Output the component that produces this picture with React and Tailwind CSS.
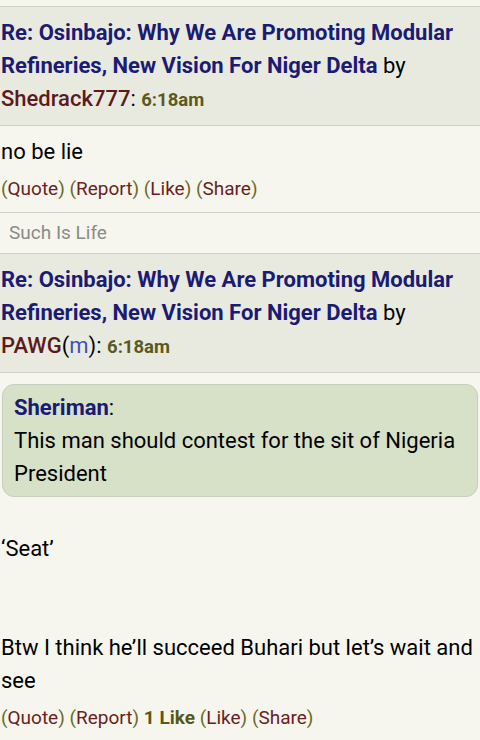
export default function App() {
  const font = { fontFamily: "Roboto, 'Noto Sans', sans-serif" };
  const Links = ({ likes }) => (
    <div className="mt-[6px] text-[19px] leading-[29px] text-[#6b6b24]">
      (<span className="text-[#6b1f22]">Quote</span>) (<span className="text-[#6b1f22]">Report</span>){" "}
      {likes && <b className="font-bold text-[#585818]">{likes} </b>}
      (<span className="text-[#6b1f22]">Like</span>) (<span className="text-[#6b1f22]">Share</span>)
    </div>
  );
  const Header = ({ children }) => (
    <div className="bg-[#e8eae0] border-b border-[#cfd0c6] pl-[1px] pr-1 pt-[9px] pb-[8px] text-[22px] leading-[33px] text-black">
      <span className="font-bold text-[#1b1b74]">
        Re: Osinbajo: Why We Are Promoting Modular Refineries, New Vision For Niger Delta
      </span>{" "}
      by {children}
    </div>
  );
  return (
    <div className="w-[480px] min-h-[740px] bg-[#f6f6ee]" style={font}>
      <div className="h-[7px] border-b border-[#cfd0c6]" />
      <Header>
        <span className="font-medium text-[#5c1a1c]">Shedrack777</span>:{" "}
        <span className="font-bold text-[18.5px] text-[#5a5a1e]">6:18am</span>
      </Header>
      <div className="border-b border-[#cfd0c6] pl-[1px] pt-[9px] pb-[9px]">
        <div className="text-[22px] leading-[33px] text-black">no be lie</div>
        <Links />
      </div>
      <div className="border-b border-[#cfd0c6] pl-[9px] h-[41px] flex items-center text-[19px] text-[#8a8a86]">
        Such Is Life
      </div>
      <Header>
        <span className="font-medium text-[#5c1a1c]">PAWG</span>(
        <span className="text-[#3f4fc4]">m</span>):{" "}
        <span className="font-bold text-[18.5px] text-[#5a5a1e]">6:18am</span>
      </Header>
      <div className="pl-[1px] pt-[11px] pb-[10px] text-[22px] leading-[33px] text-black">
        <div className="ml-[1px] mr-[2px] rounded-[12px] border border-[#c6cebd] bg-[#d6e1c8] pl-[11px] pr-2 pt-[6px] pb-[6px]">
          <span className="font-bold text-[#1b1b74]">Sheriman</span>:
          <div>This man should contest for the sit of Nigeria President</div>
        </div>
        <div className="mt-[35px]">‘Seat’</div>
        <div className="mt-[66px]">Btw I think he’ll succeed Buhari but let’s wait and see</div>
        <Links likes="1 Like" />
      </div>
    </div>
  );
}
